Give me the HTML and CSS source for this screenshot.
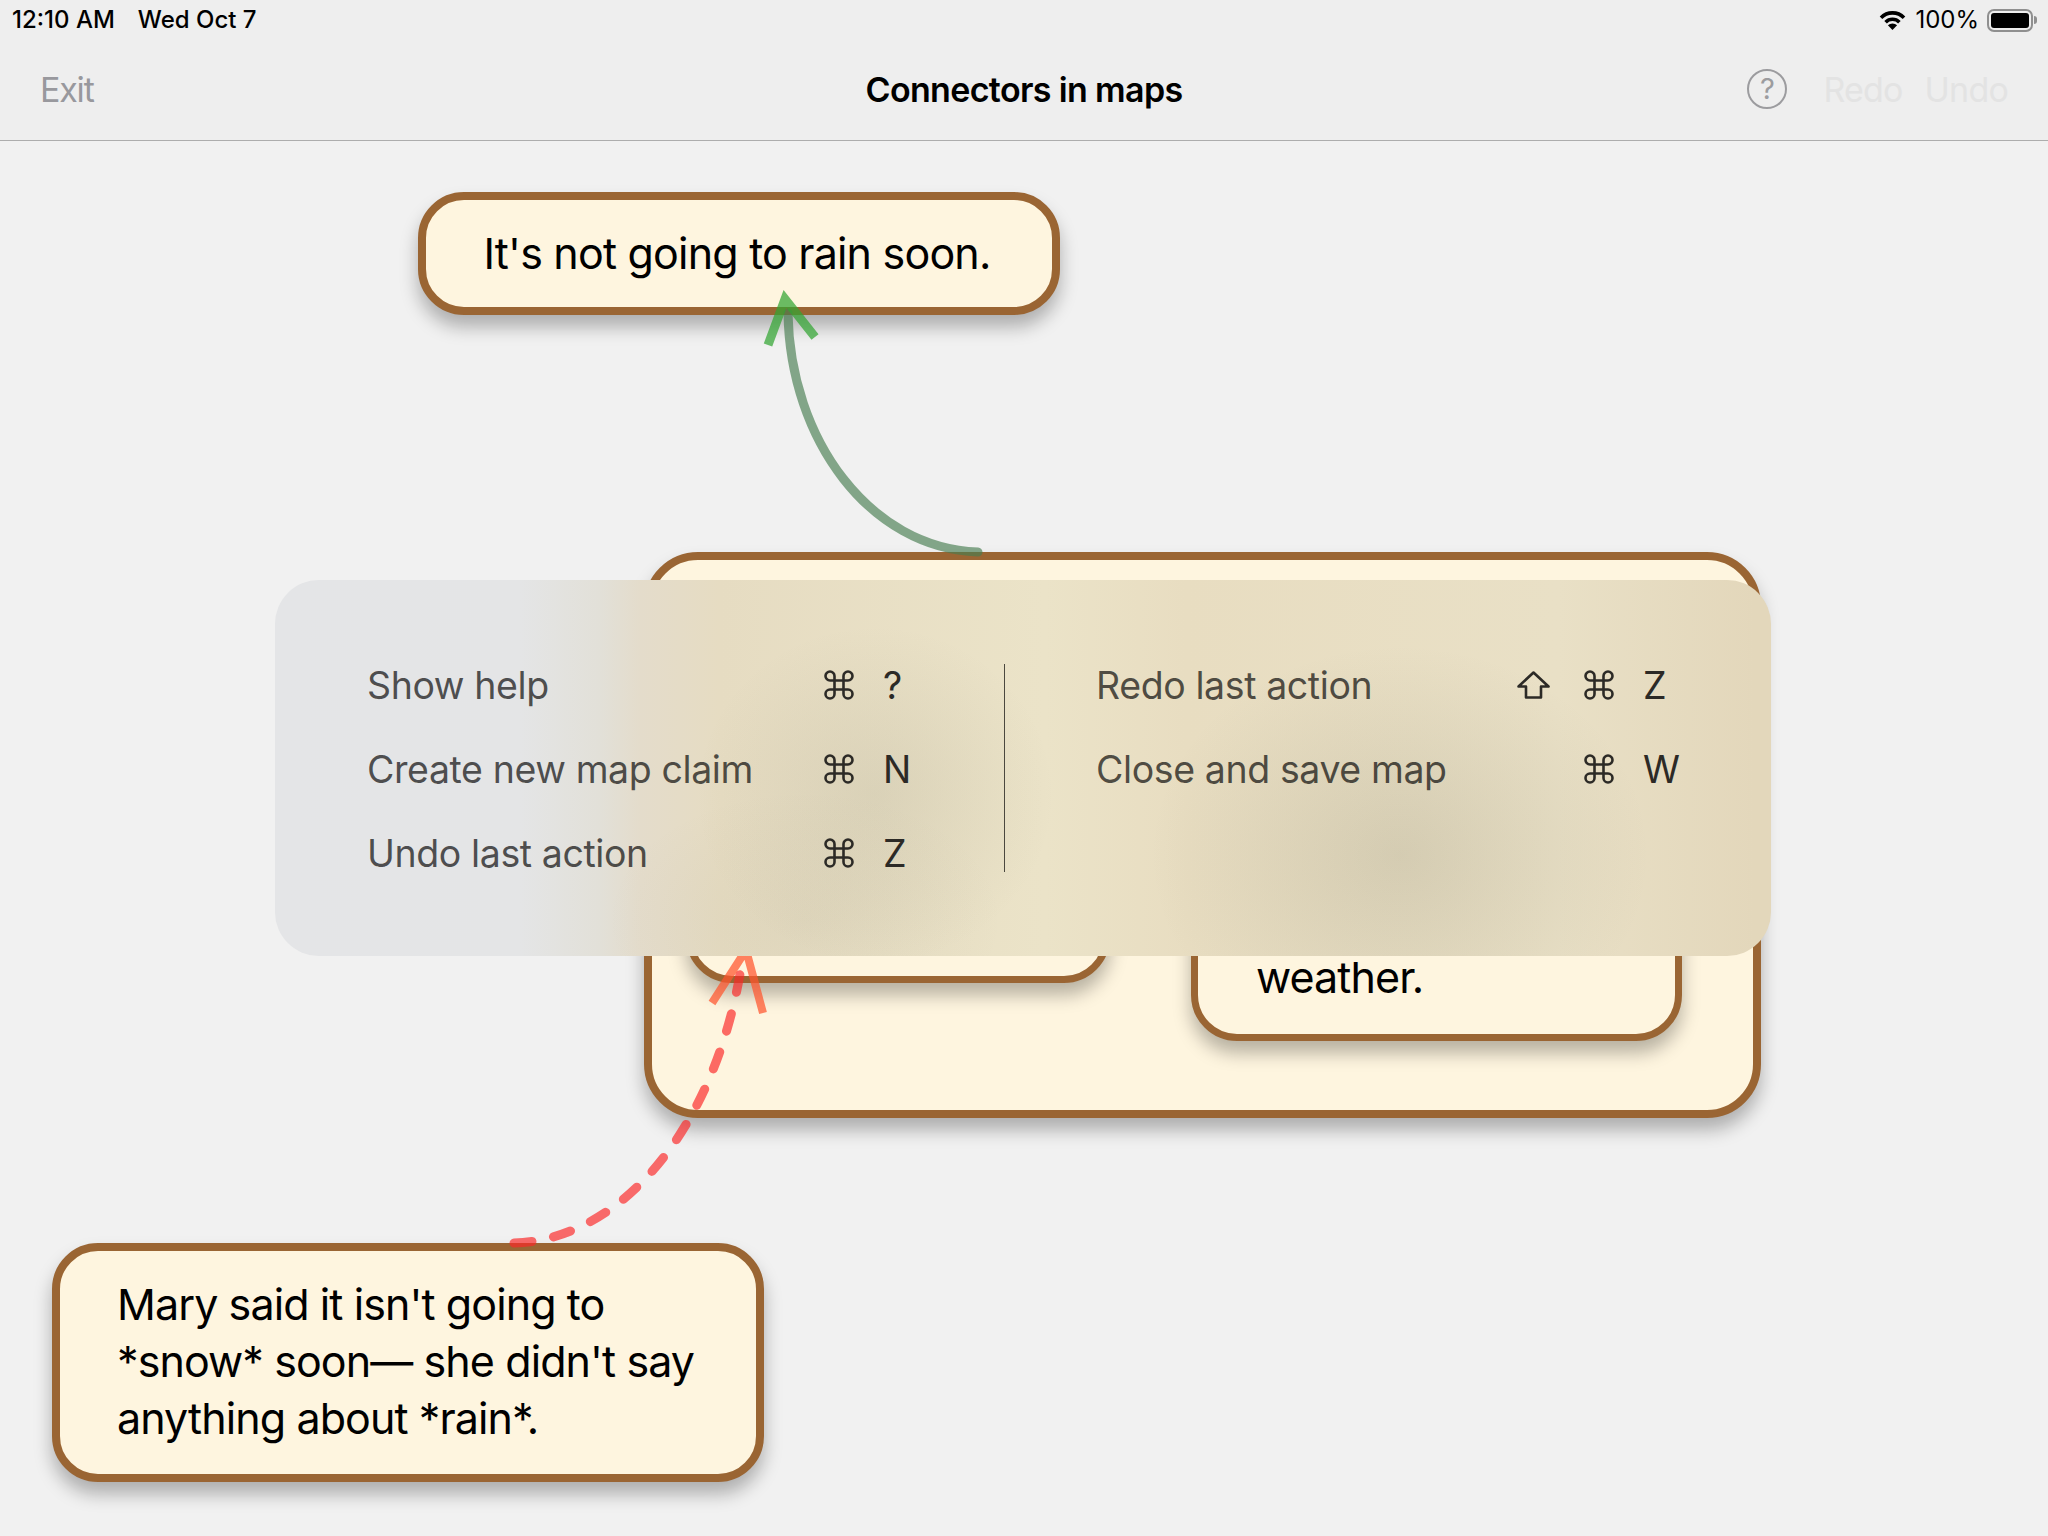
FILE: index.html
```html
<!DOCTYPE html>
<html lang="en">
<head>
<meta charset="utf-8">
<title>Connectors in maps</title>
<link rel="stylesheet" href="styles.css">
</head>
<body>
<svg class="defs" width="0" height="0" aria-hidden="true">
  <symbol id="cmd" viewBox="0 0 30 30"><path d="M10.5 10.5V6A4.5 4.5 0 1 0 6 10.5H24A4.5 4.5 0 1 0 19.5 6V24A4.5 4.5 0 1 0 24 19.5H6A4.5 4.5 0 1 0 10.5 24Z"/></symbol>
  <symbol id="shift" viewBox="0 0 33 28"><path d="M16.5 1.5L31.5 15.5H24V26.5H9V15.5H1.5Z"/></symbol>
</svg>
<div class="page">
  <header class="header">
    <div class="status">
      <div class="status-left"><span>12:10 AM</span><span>Wed Oct 7</span></div>
      <div class="status-right">
        <svg class="wifi" viewBox="0 0 27 20"><path class="wifi-arc" d="M2 7.8A16 16 0 0 1 25 7.8"/><path class="wifi-arc" d="M6.6 12.2A9.6 9.6 0 0 1 20.4 12.2"/><path class="wifi-dot" d="M13.5 20L8.9 15.3A6.5 6.5 0 0 1 18.1 15.3Z"/></svg>
        <span class="pct">100%</span>
        <div class="battery"><div class="battery-fill"></div></div><div class="battery-cap"></div>
      </div>
    </div>
    <nav class="nav">
      <span class="exit">Exit</span>
      <span class="title">Connectors in maps</span>
      <div class="nav-right">
        <span class="help">?</span>
        <span class="muted redo">Redo</span>
        <span class="muted">Undo</span>
      </div>
    </nav>
  </header>
  <main class="map">
    <div class="node node-rain">It's not going to rain soon.</div>
    <div class="node node-group">
      <div class="node node-child-a"></div>
      <div class="node node-child-b">weather.</div>
    </div>
    <div class="node node-mary">
      <span class="line">Mary said it isn't going to</span>
      <span class="line">*snow* soon— she didn't say</span>
      <span class="line">anything about *rain*.</span>
    </div>
    <svg class="links" viewBox="0 141 2048 1395">
      <path class="green-line" d="M978 552C870 548 790 440 788 313"/>
      <path class="green-head" d="M768 345L785 299L815 337"/>
      <path class="red-line" d="M514 1243C620 1240 716 1130 742 962"/>
      <path class="red-head" d="M712 1003L746 950L763 1013"/>
    </svg>
    <section class="shortcuts">
      <div class="col col-left">
        <div class="row"><span class="label label-left">Show help</span><svg class="cmd"><use href="#cmd"/></svg><span class="key">?</span></div>
        <div class="row"><span class="label label-left">Create new map claim</span><svg class="cmd"><use href="#cmd"/></svg><span class="key">N</span></div>
        <div class="row"><span class="label label-left">Undo last action</span><svg class="cmd"><use href="#cmd"/></svg><span class="key">Z</span></div>
      </div>
      <div class="divider"></div>
      <div class="col">
        <div class="row"><span class="label label-right">Redo last action</span><svg class="shift"><use href="#shift"/></svg><svg class="cmd"><use href="#cmd"/></svg><span class="key">Z</span></div>
        <div class="row"><span class="label label-right label-wide">Close and save map</span><svg class="cmd"><use href="#cmd"/></svg><span class="key">W</span></div>
      </div>
    </section>
  </main>
</div>
</body>
</html>
```

FILE: styles.css
```css
* { box-sizing: border-box; }
html, body { margin: 0; padding: 0; }
body { font-family: Inter, "Liberation Sans", sans-serif; background: #f1f1f1; color: #000; }
.defs { position: absolute; }
.page { width: 2048px; height: 1536px; display: flex; flex-direction: column; overflow: hidden; }

.header { height: 141px; background: #eeeeee; border-bottom: 1px solid #adadad; flex: none; }
.status { height: 56px; padding: 5px 11px 0 12px; display: flex; justify-content: space-between; align-items: flex-start; font-size: 24px; line-height: 30px; font-weight: 500; }
.status-left { display: flex; gap: 23px; }
.status-right { display: flex; align-items: center; height: 30px; }
.wifi { width: 27px; height: 20px; margin-right: 9px; }
.wifi-arc { fill: none; stroke: #000; stroke-width: 3.6; }
.wifi-dot { fill: #000; }
.pct { margin-right: 8px; font-weight: 400; }
.battery { width: 46px; height: 23px; border: 2px solid #8f8f8f; border-radius: 7px; padding: 2px; }
.battery-fill { width: 100%; height: 100%; background: #000; border-radius: 3px; }
.battery-cap { width: 3px; height: 8px; background: #8f8f8f; border-radius: 0 3px 3px 0; margin-left: 1px; }

.nav { height: 84px; position: relative; display: flex; justify-content: space-between; align-items: flex-start; padding: 0 40px 0 40px; font-size: 34px; line-height: 26px; letter-spacing: -.8px; }
.exit { color: #98989d; padding-top: 21px; letter-spacing: -1.2px; }
.title { position: absolute; left: 0; right: 0; top: 21px; text-align: center; font-weight: 600; letter-spacing: -.65px; }
.nav-right { display: flex; align-items: flex-start; }
.help { width: 40px; height: 40px; border: 2px solid #9c9c9f; border-radius: 50%; margin: 13px 36px 0 0; color: #9c9c9f; font-size: 29px; line-height: 36px; text-align: center; letter-spacing: 0; }
.muted { color: #e3e3e3; padding-top: 21px; }
.redo { margin-right: 22px; }

.map { flex: 1; position: relative; }
.node { position: absolute; background: #fef5df; border: 8px solid #9a6533; border-radius: 46px; box-shadow: 0 12px 18px rgba(0, 0, 0, .28); font-size: 43px; letter-spacing: -.9px; color: #000; }
.node-rain { left: 418px; top: 51px; width: 642px; height: 123px; padding: 0 4px 2px 0; letter-spacing: -.8px; display: flex; align-items: center; justify-content: center; }
.node-group { left: 644px; top: 411px; width: 1117px; height: 566px; border-radius: 54px; }
.node-child-a { left: 34px; top: 60px; width: 424px; height: 363px; border-width: 7px; }
.node-child-b { left: 539px; top: 60px; width: 491px; height: 421px; border-width: 7px; display: flex; align-items: flex-end; padding: 0 0 31px 58px; }
.node-mary { left: 52px; top: 1102px; width: 712px; height: 239px; padding: 25px 0 0 57px; line-height: 57px; }
.line { display: block; white-space: nowrap; }

.links { position: absolute; inset: 0; width: 2048px; height: 1395px; }
.links path { fill: none; }
.green-line { stroke: rgba(70, 125, 80, .65); stroke-width: 9; stroke-linecap: round; }
.green-head { stroke: rgba(50, 165, 50, .72); stroke-width: 9; }
.red-line { stroke: rgba(250, 40, 40, .68); stroke-width: 9; stroke-linecap: round; stroke-dasharray: 18 22; }
.red-head { stroke: rgba(255, 85, 45, .72); stroke-width: 8; }

.shortcuts {
  position: absolute; left: 275px; top: 439px; width: 1496px; height: 376px;
  border-radius: 44px; padding: 63px 0 0 92px; display: flex; align-items: flex-start;
  background:
    radial-gradient(ellipse 180px 170px at 600px 215px, rgba(90, 90, 70, .1), rgba(90, 90, 70, 0)),
    radial-gradient(ellipse 200px 130px at 530px 340px, rgba(90, 90, 70, .06), rgba(90, 90, 70, 0)),
    radial-gradient(ellipse 250px 210px at 1125px 275px, rgba(90, 90, 70, .14), rgba(90, 90, 70, 0)),
    linear-gradient(to right, #e4e5e7 0, #e4e5e6 245px, #e2e0d8 325px, #e4dccb 365px, #e6dcc2 445px, #ebe3c8 770px, #e8ddc1 910px, #e9e0c6 1283px, #e3d7bb 1480px);
  font-size: 37.5px;
  letter-spacing: -.4px;
}
.col { display: flex; flex-direction: column; }
.col-left { width: 637px; }
.row { height: 84px; display: flex; align-items: center; }
.label { color: rgba(0, 0, 0, .68); white-space: nowrap; }
.label-left { width: 457px; }
.label-right { width: 421px; }
.label-wide { width: 488px; }
.cmd { width: 30px; height: 30px; margin-right: 29px; flex: none; fill: none; stroke: #2c2a26; stroke-width: 2.6; }
.shift { width: 33px; height: 28px; margin-right: 34px; flex: none; fill: none; stroke: #2c2a26; stroke-width: 2.6; stroke-linejoin: round; }
.key { color: #2c2a26; }
.divider { width: 1px; height: 208px; margin: 21px 91px 0 0; background: #4b483f; }
```
